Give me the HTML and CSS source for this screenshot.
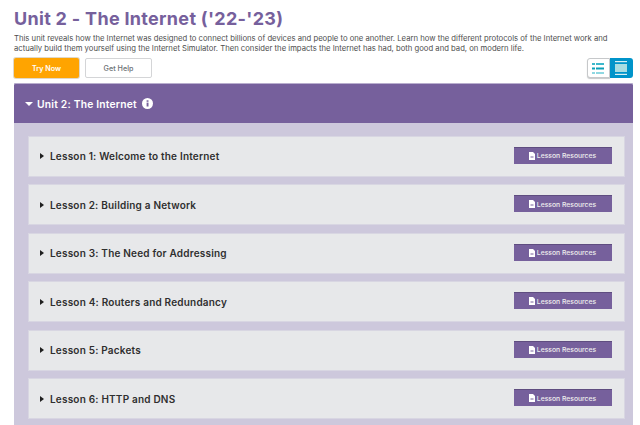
FILE: index.html
```html
<!DOCTYPE html>
<html lang="en">
<head>
<meta charset="utf-8">
<title>Unit 2 - The Internet</title>
<link rel="stylesheet" href="styles.css">
</head>
<body>
<main class="page">
  <h1 class="title">Unit 2 - The Internet ('22-'23)</h1>
  <p class="intro">This unit reveals how the Internet was designed to connect billions of devices and people to one another. Learn how the different protocols of the Internet work and actually build them yourself using the Internet Simulator. Then consider the impacts the Internet has had, both good and bad, on modern life.</p>
  <div class="actions">
    <a class="btn btn-primary">Try Now</a>
    <a class="btn btn-secondary">Get Help</a>
    <div class="view-toggle">
      <span class="view view-list">
        <svg width="12" height="11" viewBox="0 0 12 11"><rect x="0" y="0" width="3" height="2" fill="#3db8cc"/><rect x="4" y="0" width="8" height="2" fill="#3db8cc"/><rect x="0" y="4.5" width="3" height="2" fill="#0b9fb8"/><rect x="4" y="4.5" width="8" height="2" fill="#0b9fb8"/><rect x="0" y="9" width="3" height="2" fill="#8fd8e2"/><rect x="4" y="9" width="8" height="2" fill="#8fd8e2"/></svg>
      </span>
      <span class="view view-detail">
        <svg width="12" height="14" viewBox="0 0 12 14"><rect x="0" y="0" width="12" height="1.2" fill="#d8f0f4"/><rect x="0" y="3" width="12" height="8" fill="#a8dde2"/><rect x="0" y="12.8" width="12" height="1.2" fill="#d8f0f4"/></svg>
      </span>
    </div>
  </div>
  <section class="unit">
    <header class="unit-head">
      <span class="caret-down"></span>
      <h2 class="unit-name">Unit 2: The Internet</h2>
      <svg class="info" width="11" height="11" viewBox="0 0 11 11"><circle cx="5.5" cy="5.5" r="5.5" fill="#fff"/><rect x="4.6" y="4.6" width="1.9" height="3.9" fill="#76609c"/><rect x="4.6" y="2.3" width="1.9" height="1.5" fill="#76609c"/></svg>
    </header>
    <div class="lessons">
      <article class="lesson"><span class="caret-right"></span><h3 class="lesson-name">Lesson 1: Welcome to the Internet</h3><a class="resources"><svg class="doc" width="6" height="8" viewBox="0 0 6 8"><path d="M0 0h4l2 2v6H0z" fill="#fff"/><rect x="1.5" y="4.5" width="3" height="1" fill="#76609c"/></svg>Lesson Resources</a></article>
      <article class="lesson"><span class="caret-right"></span><h3 class="lesson-name">Lesson 2: Building a Network</h3><a class="resources"><svg class="doc" width="6" height="8" viewBox="0 0 6 8"><path d="M0 0h4l2 2v6H0z" fill="#fff"/><rect x="1.5" y="4.5" width="3" height="1" fill="#76609c"/></svg>Lesson Resources</a></article>
      <article class="lesson"><span class="caret-right"></span><h3 class="lesson-name">Lesson 3: The Need for Addressing</h3><a class="resources"><svg class="doc" width="6" height="8" viewBox="0 0 6 8"><path d="M0 0h4l2 2v6H0z" fill="#fff"/><rect x="1.5" y="4.5" width="3" height="1" fill="#76609c"/></svg>Lesson Resources</a></article>
      <article class="lesson"><span class="caret-right"></span><h3 class="lesson-name">Lesson 4: Routers and Redundancy</h3><a class="resources"><svg class="doc" width="6" height="8" viewBox="0 0 6 8"><path d="M0 0h4l2 2v6H0z" fill="#fff"/><rect x="1.5" y="4.5" width="3" height="1" fill="#76609c"/></svg>Lesson Resources</a></article>
      <article class="lesson"><span class="caret-right"></span><h3 class="lesson-name">Lesson 5: Packets</h3><a class="resources"><svg class="doc" width="6" height="8" viewBox="0 0 6 8"><path d="M0 0h4l2 2v6H0z" fill="#fff"/><rect x="1.5" y="4.5" width="3" height="1" fill="#76609c"/></svg>Lesson Resources</a></article>
      <article class="lesson"><span class="caret-right"></span><h3 class="lesson-name">Lesson 6: HTTP and DNS</h3><a class="resources"><svg class="doc" width="6" height="8" viewBox="0 0 6 8"><path d="M0 0h4l2 2v6H0z" fill="#fff"/><rect x="1.5" y="4.5" width="3" height="1" fill="#76609c"/></svg>Lesson Resources</a></article>
    </div>
  </section>
</main>
</body>
</html>
```
FILE: styles.css
```css
* { box-sizing: border-box; }
html, body { margin: 0; height: 425px; overflow: hidden; background: #fff; }
body { font-family: Inter, "Liberation Sans", sans-serif; }
.page { margin-left: 14px; width: 618.5px; padding-top: 6px; }
.title { margin: 0; font-size: 18px; line-height: 26px; font-weight: 700; color: #76609c; letter-spacing: 0.3px; white-space: nowrap; }
.intro { margin: 0; font-size: 7.7px; line-height: 9.5px; height: 26px; padding-top: 2px; color: #4d4d4d; width: 610px; }
.actions { display: flex; align-items: stretch; height: 20px; }
.btn { display: flex; align-items: center; justify-content: center; font-size: 7.2px; font-weight: 600; border-radius: 2px; }
.btn-primary { width: 65px; background: #ffa400; color: #fff; box-shadow: 0 0 0 1px #e0d8c8; }
.btn-secondary { width: 67px; margin-left: 6px; background: #fff; color: #6b6f73; font-weight: 500; border: 1px solid #d4d5d7; }
.view-toggle { display: flex; margin-left: auto; height: 20px; }
.view { width: 23px; display: flex; align-items: center; justify-content: center; }
.view-list { background: #fff; border: 1px solid #c6c8ca; border-radius: 3px 0 0 3px; box-shadow: 0 1px 1px #c6c8ca; }
.view-detail { background: #0094ca; border-radius: 0 3px 3px 0; }
.unit { margin-top: 5px; background: #cdc8dc; height: 345px; }
.unit-head { display: flex; align-items: center; height: 40px; padding-left: 11px; background: #76609c; border-top: 1px solid #b9aece; border-radius: 2px 2px 0 0; }
.caret-down { width: 0; height: 0; border-left: 4px solid transparent; border-right: 4px solid transparent; border-top: 4.5px solid #fff; margin-right: 4px; }
.unit-name { margin: 0; font-size: 10.3px; font-weight: 600; color: #fff; letter-spacing: 0.2px; }
.info { margin-left: 5px; }
.lessons { display: flex; flex-direction: column; gap: 7.5px; padding: 12.5px 8px 0 14px; }
.lesson { display: flex; align-items: center; height: 41px; padding: 0 12px 0 11px; background: #e7e8ea; border: 1px solid #d8d6e2; }
.caret-right { width: 0; height: 0; border-top: 3.5px solid transparent; border-bottom: 3.5px solid transparent; border-left: 4px solid #1f1f1f; margin-right: 6px; }
.lesson-name { margin: 0; flex: 1; font-size: 10px; font-weight: 600; color: #2f2f2f; letter-spacing: 0.2px; }
.resources { display: flex; align-items: center; justify-content: center; width: 98px; height: 17px; margin-bottom: 2px; background: #76609c; color: #eee; font-size: 6.8px; font-weight: 500; border-top: 1px solid #5f4d80; }
.doc { margin-right: 2px; }
```
